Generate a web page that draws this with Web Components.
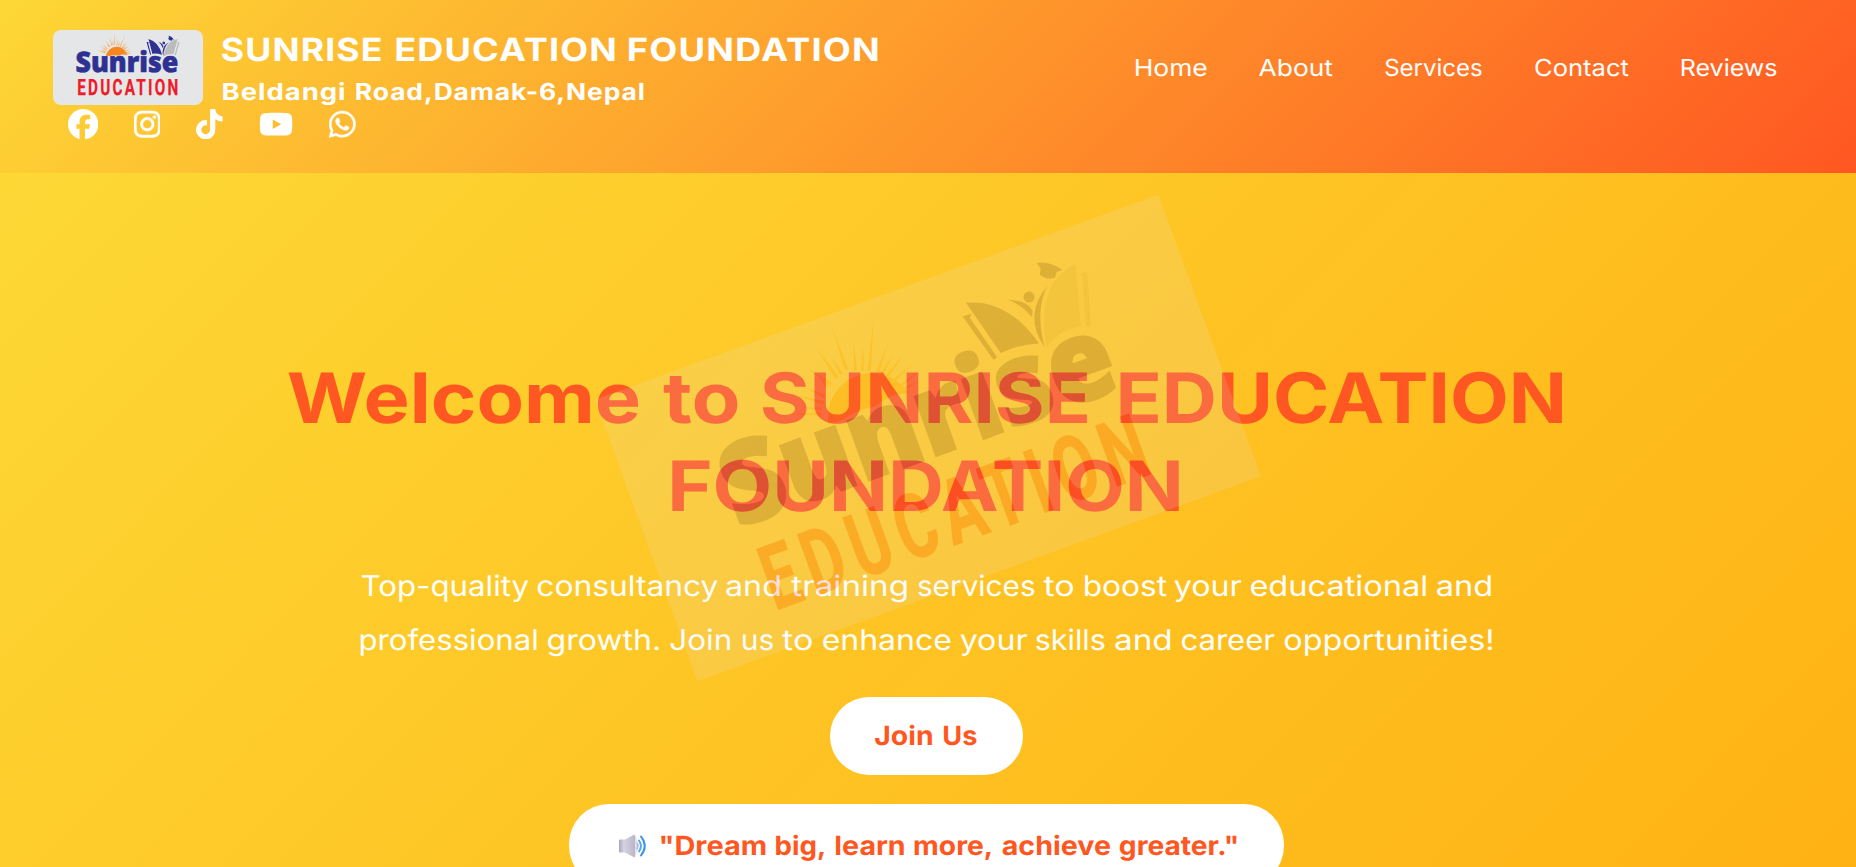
<!DOCTYPE html>
<html lang="en">
<head>
<meta charset="utf-8">
<title>Sunrise Education Foundation</title>
<style>
html,body{margin:0;height:100%;overflow:hidden}
body{font-family:Inter,"Open Sans",sans-serif;color:#fff}
</style>
</head>
<body>
<sunrise-page></sunrise-page>
<script>
const define=(name,html)=>customElements.define(name,class extends HTMLElement{
  constructor(){super();this.attachShadow({mode:'open'}).innerHTML=html;}
});

/* Approximate side bearings, in em, by the shape of a glyph's edge. */
const bearing=(c,side)=>{
  if('WVATvwyt'.includes(c))return side==='l'?.015:0;
  if(side==='l')return 'BDEFHIKLNPRUbhiklmnpru"'.includes(c)?.05:'J'===c?.025:.035;
  return 'HIMNUdilmnhuq!".,'.includes(c)?.02:0;
};

/* One line of text laid out to an exact ink width, word by word.
   "spans" lists the start and end of each word on a 1568-unit wide page. */
customElements.define('fit-line',class extends HTMLElement{
  connectedCallback(){
    const a=n=>this.getAttribute(n);
    const unit=1856/1568,words=a('text').split(' '),size=+a('size'),weight=a('weight')||400,h=a('h'),ls=+(a('ls')||0);
    const spans=a('spans').split(' ').map(s=>s.split('-').map(v=>v*unit));
    const x0=spans[0][0],w=spans[spans.length-1][1]-x0;
    const root=this.attachShadow({mode:'open'});
    root.innerHTML=`<style>:host{display:block;width:${w}px;height:${h}px}svg{display:block;overflow:visible}
      text{font:${weight} ${size}px Inter,"Open Sans",sans-serif;letter-spacing:${ls}px;fill:currentColor;text-rendering:geometricPrecision}</style>
      <svg width="${w}" height="${h}"></svg>`;
    const svg=root.querySelector('svg');
    words.forEach((word,i)=>{
      const t=document.createElementNS('http://www.w3.org/2000/svg','text');
      t.textContent=word;svg.append(t);
      const l=bearing(word[0],'l')*size,r=bearing(word[word.length-1],'r')*size;
      const scale=(spans[i][1]-spans[i][0])/(t.getComputedTextLength()-l-r-ls);
      t.setAttribute('transform',`translate(${spans[i][0]-x0-l*scale} ${a('base')}) scale(${scale} 1)`);
    });
  }
});

/* Logo card: sun, open book with a graduate, and the two-line wordmark. */
customElements.define('sunrise-logo',class extends HTMLElement{
  constructor(){
    super();
    const rays=[[425,258,470,388],[550,240,538,391],[375,317,442,413],[345,378,424,432],[595,307,562,396],[490,305,497,391],[519,320,517,391],[643,340,590,409],[610,340,576,402],[672,366,606,426],[692,388,618,447],[692,420,628,452],[425,350,455,402],[380,400,412,440],[305,460,402,488],[335,436,404,468],[295,522,396,520],[330,500,396,506]];
    const poly=rays.map(([x,y,bx,by])=>{
      const d=Math.hypot(bx-x,by-y),nx=-(by-y)/d*5,ny=(bx-x)/d*5;
      return `M${x},${y}L${bx+nx},${by+ny}L${bx-nx},${by-ny}Z`;}).join('');
    this.attachShadow({mode:'open'}).innerHTML=`<style>:host{display:block}svg{display:block;width:100%;height:100%}text{text-rendering:geometricPrecision}</style>
    <svg viewBox="0 0 600 300"><rect width="600" height="300" fill="#e4e6e8"/>
    <path d="M211 103A44 44 0 0 1 297 101Q280 95 262 102Q238 99 226 104Z" fill="#f7861f"/>
    <g transform="translate(300 150) rotate(20) translate(-238 -197.6) scale(.33333)">
      <path d="${poly}" fill="#f9a13a"/>
      <g fill="#2e3192">
        <path d="M828 187Q952 175 1047 309Q982 312 932 338Z"/>
        <path d="M818 228L845 220L840 233L921 350L911 359Z"/>
        <circle cx="1017" cy="170" r="16.5"/>
        <path d="M952 178Q1014 180 1028 212L1026 230Q992 190 952 178Z"/>
        <path d="M1072 137Q998 225 1064 321Q1034 210 1072 137Z"/>
        <path d="M1040 67Q1082 62 1117 89L1100 95L1095 111Q1070 120 1049 103L1052 84Z"/>
      </g>
      <g fill="#b9bbbd"><path d="M1157 71Q1068 112 1063 230Q1062 285 1070 320Q1110 265 1172 258Z"/>
      <path d="M1166 103L1191 92L1203 259L1188 257L1176 105Z"/></g>
    </g>
    <text x="90" y="169.500" font-family="Open Sans" font-weight="800" font-size="113" textLength="411" lengthAdjust="spacingAndGlyphs" fill="#2e3192" stroke="#2e3192" stroke-width="2.500">Sunrise</text>
    <text transform="translate(97 260) scale(.68 1)" font-family="Roboto" font-weight="700" font-size="90" letter-spacing="13" fill="#ed1c2b" stroke="#ed1c2b" stroke-width="1">EDUCATION</text>
    </svg>`;
  }
});

define('social-links',`<style>
:host{display:flex;gap:36px;height:30.4px}svg{display:block;height:30.4px;fill:#fff}</style>
<svg viewBox="0 0 512 512" width="30.4" aria-label="Facebook"><path d="M512 256C512 114.6 397.4 0 256 0S0 114.6 0 256c0 120 82.7 220.800 194.200 248.500V334.200H141.400V256h52.800v-33.700c0-87.100 39.400-127.500 125-127.500 16.200 0 44.200 3.200 55.700 6.400V172c-6-.6-16.500-1-29.600-1-42 0-58.200 15.900-58.200 57.200V256h83.600l-14.400 78.200h-69.300v175.900C413.800 494.800 512 386.900 512 256z"/></svg>
<svg viewBox="0 0 448 512" width="26.6" aria-label="Instagram"><path stroke="#fff" stroke-width="8" d="M224.100 141c-63.600 0-114.900 51.300-114.900 114.900s51.300 114.900 114.900 114.900S339 319.500 339 255.900 287.700 141 224.100 141zm0 189.600c-41.100 0-74.700-33.500-74.700-74.700s33.500-74.700 74.700-74.700 74.700 33.500 74.700 74.700-33.600 74.700-74.700 74.700zm146.400-194.300c0 14.900-12 26.800-26.800 26.800-14.900 0-26.800-12-26.800-26.800s12-26.800 26.800-26.800 26.800 12 26.800 26.800zm76.100 27.200c-1.700-35.900-9.900-67.700-36.200-93.900-26.200-26.200-58-34.400-93.900-36.200-37-2.100-147.900-2.100-184.900 0-35.800 1.700-67.600 9.900-93.900 36.100s-34.400 58-36.200 93.900c-2.100 37-2.100 147.900 0 184.900 1.700 35.900 9.900 67.700 36.200 93.900s58 34.400 93.900 36.200c37 2.100 147.900 2.100 184.900 0 35.900-1.700 67.700-9.900 93.900-36.200 26.200-26.200 34.400-58 36.200-93.900 2.100-37 2.100-147.800 0-184.800zM398.800 388c-7.800 19.600-22.900 34.700-42.600 42.600-29.500 11.700-99.500 9-132.100 9s-102.700 2.600-132.100-9c-19.600-7.800-34.700-22.900-42.600-42.600-11.700-29.500-9-99.500-9-132.100s-2.600-102.700 9-132.100c7.800-19.600 22.900-34.700 42.600-42.600 29.500-11.700 99.500-9 132.100-9s102.700-2.600 132.100 9c19.600 7.800 34.700 22.900 42.600 42.600 11.700 29.500 9 99.500 9 132.100s2.700 102.700-9 132.100z"/></svg>
<svg viewBox="0 0 448 512" width="26.6" aria-label="TikTok"><path d="M448 209.900a210.100 210.100 0 0 1-122.800-39.300v178.800A162.600 162.600 0 1 1 185 188.300v89.900a74.600 74.600 0 1 0 52.200 71.200V0h88a121.200 121.200 0 0 0 1.900 22.200 122.200 122.200 0 0 0 53.900 80.200 121.400 121.400 0 0 0 67 20.100z"/></svg>
<svg viewBox="0 0 576 512" width="34.2" aria-label="YouTube"><path d="M549.700 124.100c-6.300-23.700-24.800-42.300-48.300-48.600C458.800 64 288 64 288 64S117.200 64 74.600 75.500c-23.500 6.300-42 24.900-48.300 48.600C14.900 167 14.900 256.400 14.900 256.400s0 89.400 11.400 132.300c6.300 23.700 24.800 41.500 48.300 47.800C117.200 448 288 448 288 448s170.800 0 213.400-11.500c23.500-6.300 42-24.200 48.300-47.800 11.400-42.900 11.400-132.300 11.400-132.300s0-89.400-11.400-132.300zM232.200 337.600V175.200l142.700 81.200z"/></svg>
<svg viewBox="0 0 448 512" width="26.6" aria-label="WhatsApp"><path stroke="#fff" stroke-width="8" d="M380.900 97.100C339 55.100 283.200 32 223.900 32c-122.400 0-222 99.600-222 222 0 39.100 10.200 77.300 29.600 111L0 480l117.700-30.900c32.400 17.700 68.900 27 106.100 27h.1c122.300 0 224.100-99.600 224.100-222 0-59.300-25.200-115-67.100-157zM223.900 438.700c-33.200 0-65.700-8.900-94-25.700l-6.700-4-69.800 18.300L72 359.200l-4.400-7c-18.500-29.400-28.200-63.300-28.200-98.200 0-101.700 82.800-184.500 184.600-184.500 49.300 0 95.600 19.200 130.400 54.100s56.200 81.200 56.100 130.500c0 101.800-84.900 184.600-186.600 184.600zm101.200-138.200c-5.500-2.800-32.800-16.200-37.900-18-5.100-1.900-8.800-2.800-12.500 2.800s-14.300 18-17.600 21.800c-3.200 3.700-6.500 4.200-12 1.400-32.600-16.300-54-29.100-75.500-66-5.700-9.800 5.700-9.100 16.300-30.300 1.800-3.700.9-6.900-.5-9.700s-12.500-30.100-17.100-41.200c-4.500-10.800-9.100-9.300-12.500-9.500-3.200-.2-6.900-.2-10.600-.2s-9.700 1.400-14.800 6.900c-5.100 5.600-19.400 19-19.400 46.300s19.900 53.700 22.600 57.400c2.800 3.700 39.100 59.700 94.800 83.800 35.200 15.200 49 16.500 66.600 13.900 10.700-1.600 32.800-13.400 37.400-26.400s4.600-24.100 3.200-26.400c-1.300-2.500-5-3.900-10.500-6.600z"/></svg>`);

define('site-nav',`<style>:host{display:flex;gap:52px}</style>
<fit-line text="Home" spans="957.800-1019.300" h="30" base="22" size="23.500"></fit-line>
<fit-line text="About" spans="1063-1125.500" h="30" base="22" size="23.500"></fit-line>
<fit-line text="Services" spans="1169.500-1252" h="30" base="22" size="23.500"></fit-line>
<fit-line text="Contact" spans="1296-1375.300" h="30" base="22" size="23.500"></fit-line>
<fit-line text="Reviews" spans="1420-1501.600" h="30" base="22" size="23.500"></fit-line>`);

define('site-header',`<style>
:host{display:flex;justify-content:space-between;box-sizing:border-box;height:173px;padding:30px 78.500px 0 53px;background:linear-gradient(135deg,#fdd835,#ff5722)}
.brand{display:flex;height:75px;gap:18.500px}
sunrise-logo{width:150px;height:75px;border-radius:8px;overflow:hidden}
social-links{margin:3.500px 0 0 14.500px}
site-nav{margin-top:24px}
.sub{margin-left:1px}
</style>
<div><div class="brand"><sunrise-logo></sunrise-logo><div>
<fit-line text="SUNRISE EDUCATION FOUNDATION" spans="187-322.500 334-520 530.500-742" h="42" base="31" size="31.800" weight="700" ls="1"></fit-line>
<fit-line class="sub" text="Beldangi Road,Damak-6,Nepal" spans="188-291 300.500-544" h="33" base="28" size="23.500" weight="700" ls=".8"></fit-line>
</div></div><social-links></social-links></div><site-nav></site-nav>`);

define('pill-button',`<style>
:host{display:flex;align-items:flex-start;box-sizing:border-box;background:#fff;color:#ff5722;border-radius:40px}
</style><slot></slot>`);

define('speaker-icon',`<style>:host{display:block}svg{display:block}</style>
<svg width="28" height="24" viewBox="0 0 28 24"><defs><linearGradient id="g" x2="1"><stop stop-color="#aaa5b6"/><stop offset=".3" stop-color="#d8d3e2"/><stop offset="1" stop-color="#bab5c7"/></linearGradient></defs>
<path d="M0 6.500Q0 5.500 1 5.500H6L15 .7Q16 .4 16 1.500V22.500Q16 23.600 15 23.200L6 18.500H1Q0 18.500 0 17.500Z" fill="url(#g)"/><path d="M16 1v22q2.500-4 2.500-11T16 1z" fill="#e4e0ec"/>
<g fill="none" stroke-linecap="round"><path d="M18 9q2 3 0 6" stroke="#a9b9d3" stroke-width="1.500"/><path d="M20 6.500q4 5.500 0 11" stroke="#57a9ee" stroke-width="2"/><path d="M22 2.500q7.500 9.500 0 19" stroke="#3b94e8" stroke-width="2"/></g></svg>`);

define('welcome-hero',`<style>
:host{display:flex;flex-direction:column;align-items:center;box-sizing:border-box;flex:1;padding:184px 3px 0 0;overflow:hidden;background:linear-gradient(135deg,#fdd835,#ffb012) 0 0/100% 800px no-repeat}
h1,p{margin:0;display:flex;flex-direction:column;align-items:center}
h1{color:#ff5722}p{margin-top:27px}
pill-button{flex:none;margin-top:29px}
.join{width:193px;height:78px;padding:22px 0 0 45px}
.quote{width:715px;height:82px;padding:25px 0 0 50px;gap:12.500px}
speaker-icon{margin-top:5px}
</style>
<h1><fit-line text="Welcome to SUNRISE EDUCATION" spans="242.700-541 560.500-625 643.500-921 945-1322" h="88" base="66" size="69.500" weight="700"></fit-line>
<fit-line text="FOUNDATION" spans="567.500-999.500" h="88" base="66" size="69.500" weight="700"></fit-line></h1>
<p><fit-line text="Top-quality consultancy and training services to boost your educational and" spans="304-446 453-606 612.500-659 668-767 774.500-874 881-907 915-985 991-1048 1055.500-1205 1213-1260" h="54" base="36" size="28.500"></fit-line>
<fit-line text="professional growth. Join us to enhance your skills and career opportunities!" spans="304-454.500 462.500-558 566-618 627-654 661-687 695-804 811-868 875-934 942-990 998-1077 1085-1262" h="54" base="36" size="28.500"></fit-line></p>
<pill-button class="join"><fit-line text="Join Us" spans="739-788 797-825.500" h="34" base="26" size="26.500" weight="700"></fit-line></pill-button>
<pill-button class="quote"><speaker-icon></speaker-icon><fit-line text='"Dream big, learn more, achieve greater."' spans="557-647 655-697 705.500-764 772-838 846.500-938 945.500-1046" h="34" base="26" size="26.500" weight="700"></fit-line></pill-button>`);

define('sunrise-page',`<style>
:host{display:flex;flex-direction:column;position:relative;height:867px;overflow:hidden}
.mark{position:absolute;left:628px;top:287.500px;width:600px;height:300px;transform:rotate(-20deg);opacity:.15;pointer-events:none}
</style><site-header></site-header><welcome-hero></welcome-hero><sunrise-logo class="mark"></sunrise-logo>`);
</script>
</body>
</html>
